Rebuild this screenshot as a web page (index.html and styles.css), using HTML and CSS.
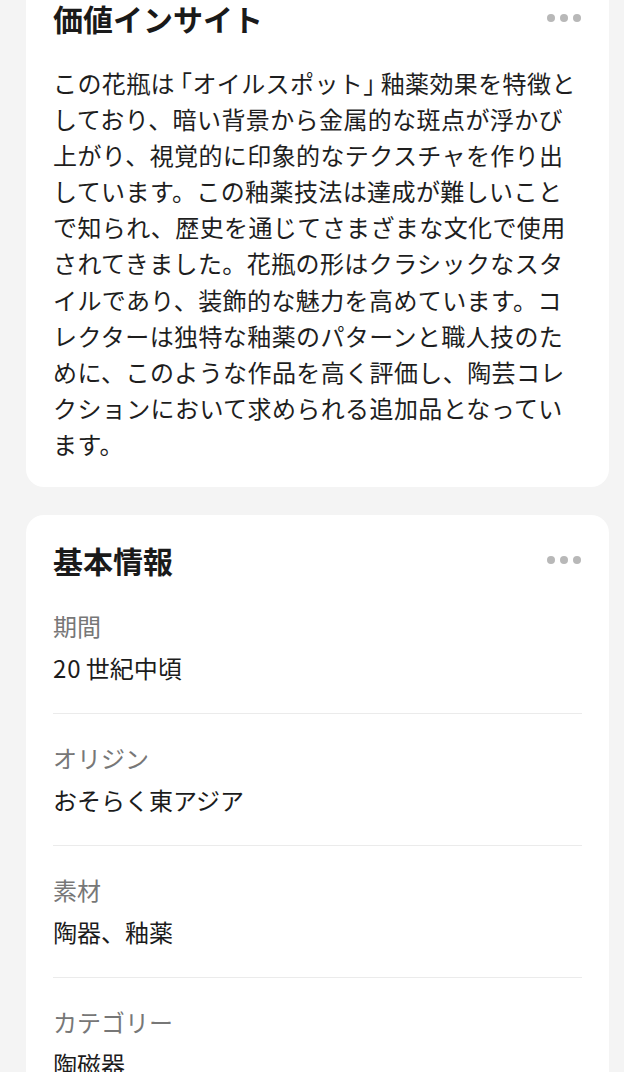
FILE: index.html
```html
<!DOCTYPE html>
<html lang="ja">
<head>
<meta charset="utf-8">
<title>詳細</title>
<link rel="stylesheet" href="styles.css">
</head>
<body>
<main class="page">
  <section class="card">
    <header class="card-head">
      <h2 class="card-title">価値インサイト</h2>
      <span class="more" aria-label="その他"><i></i><i></i><i></i></span>
    </header>
    <p class="insight">この花瓶は<span class="bk bk-open">「</span>オイルスポット<span class="bk bk-close">」</span>釉薬効果を特徴としており、暗い背景から金属的な斑点が浮かび上がり、視覚的に印象的なテクスチャを作り出しています。この釉薬技法は達成が難しいことで知られ、歴史を通じてさまざまな文化で使用されてきました。花瓶の形はクラシックなスタイルであり、装飾的な魅力を高めています。コレクターは独特な釉薬のパターンと職人技のために、このような作品を高く評価し、陶芸コレクションにおいて求められる追加品となっています。</p>
  </section>

  <section class="card">
    <header class="card-head">
      <h2 class="card-title">基本情報</h2>
      <span class="more" aria-label="その他"><i></i><i></i><i></i></span>
    </header>
    <dl class="info">
      <div class="row">
        <dt>期間</dt>
        <dd><span class="num">20</span>世紀中頃</dd>
      </div>
      <div class="row">
        <dt>オリジン</dt>
        <dd>おそらく東アジア</dd>
      </div>
      <div class="row">
        <dt>素材</dt>
        <dd>陶器、釉薬</dd>
      </div>
      <div class="row">
        <dt>カテゴリー</dt>
        <dd>陶磁器</dd>
      </div>
    </dl>
  </section>
</main>
<div class="bottom-bar"></div>
</body>
</html>
```

FILE: styles.css
```css
* {
  box-sizing: border-box;
}

html, body {
  margin: 0;
  padding: 0;
  background: #f4f4f4;
}

body {
  font-family: "Noto Sans CJK JP", "Noto Sans", sans-serif;
  color: #1c1c1c;
  overflow: hidden;
}

.page {
  display: flex;
  flex-direction: column;
  gap: 28px;
  padding: 0 15px 40px 26px;
  margin-top: -27px;
}

.card {
  background: #ffffff;
  border-radius: 18px;
  padding: 25px 27px 25px 27px;
}

.card-head {
  display: flex;
  align-items: center;
  justify-content: space-between;
  height: 40px;
}

.card-title {
  margin: 0;
  font-size: 30px;
  line-height: 40px;
  font-weight: 700;
  color: #1a1a1a;
}

.more {
  display: flex;
  gap: 4.5px;
  padding-right: 1px;
}

.more i {
  display: block;
  width: 8.5px;
  height: 8.5px;
  border-radius: 50%;
  background: #b8b8b8;
}

.insight {
  margin: 27px 0 0 0;
  font-size: 24px;
  line-height: 36.1px;
  letter-spacing: 0.4px;
  color: #1e1e1e;
}

.bk {
  font-feature-settings: "halt" 1;
}

.bk-open {
  margin-left: 5px;
}

.bk-close {
  margin-right: 5px;
}

.info {
  margin: 2px 0 0 0;
}

.row {
  display: flex;
  flex-direction: column;
  gap: 6px;
  padding: 26px 0 27px 0;
  border-bottom: 1px solid #ebebeb;
}

.row dt {
  font-size: 24px;
  line-height: 36px;
  color: #777777;
}

.row dd {
  margin: 0;
  font-size: 24px;
  line-height: 36px;
  color: #1c1c1c;
}

.num {
  letter-spacing: 1px;
  margin-right: 4px;
}

.bottom-bar {
  position: fixed;
  left: 0;
  right: 0;
  bottom: 0;
  height: 8px;
  background: #ffffff;
}
```
